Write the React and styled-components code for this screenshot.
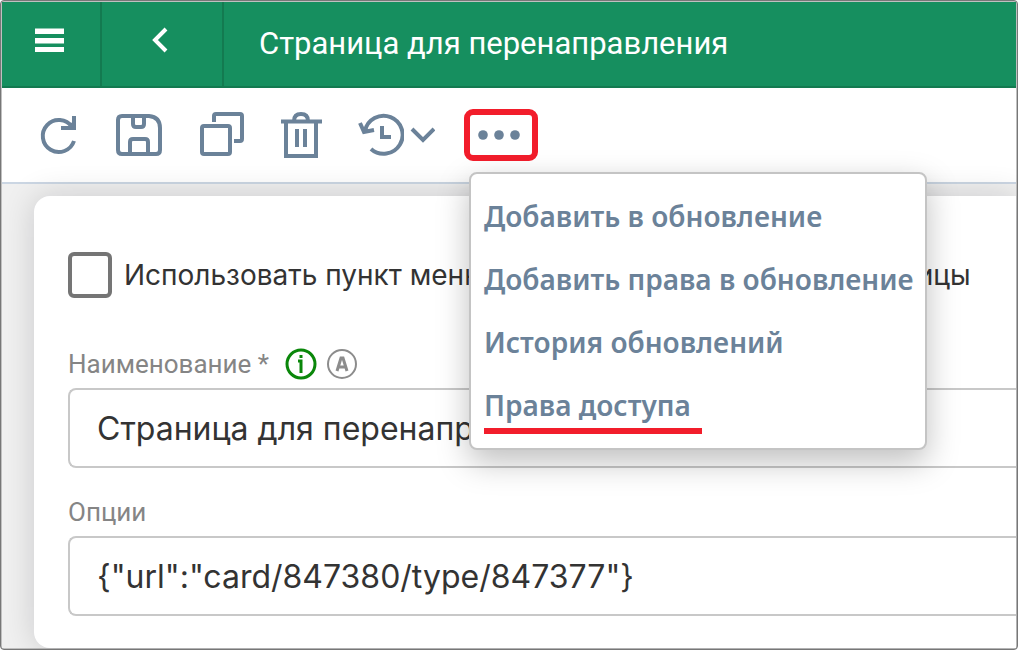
import styled, { createGlobalStyle } from "styled-components";

const menuItems = [
    { title: "Добавить в обновление" },
    { title: "Добавить права в обновление" },
    { title: "История обновлений" },
    { title: "Права доступа", marked: true },
];

export default function App() {
    return (
        <>
            <GlobalStyle/>
            <Frame>
                <Header>
                    <HeaderButton $width={100} aria-label="Меню">
                        <svg width="48" height="48" viewBox="0 0 48 48" fill="currentColor">
                            <path d="M8 8.500h29v5.500H8zM8 18h29v5.500H8zM8 27h29v5H8z"/>
                        </svg>
                    </HeaderButton>
                    <HeaderButton $width={122} aria-label="Назад">
                        <svg width="48" height="48" viewBox="0 0 48 48" fill="none" stroke="currentColor" strokeWidth="4">
                            <path d="M28 9L17 20L28 31"/>
                        </svg>
                    </HeaderButton>
                    <Title>Страница для перенаправления</Title>
                </Header>

                <Toolbar>
                    <ToolButton aria-label="Обновить">
                        <Icon>
                            <path d="M40 30A16 16 0 1 1 38 16"/>
                            <path d="M40 5V17H27M35 17L39 13"/>
                        </Icon>
                    </ToolButton>
                    <ToolButton aria-label="Сохранить">
                        <Icon>
                            <path d="M7 5H34Q45 6 45 17V39Q45 43 41 43H7Q3 43 3 39V9Q3 5 7 5Z"/>
                            <path d="M18 5V13Q18 16 21 16H26Q29 16 29 13V5"/>
                            <path d="M15 43V31Q15 28 18 28H30Q33 28 33 31V43"/>
                        </Icon>
                    </ToolButton>
                    <ToolButton aria-label="Копировать">
                        <Icon>
                            <rect x="6" y="15" width="28" height="28" rx="2"/>
                            <path d="M18 11V5Q18 3 20 3H44Q46 3 46 5V28Q46 30 44 30H38"/>
                        </Icon>
                    </ToolButton>
                    <ToolButton aria-label="Удалить">
                        <Icon>
                            <path d="M4 10.500H45M9 11V45H39V11M17 10Q17 3 24 3Q31 3 31 10"/>
                            <path d="M20 18V36M28 18V36"/>
                        </Icon>
                    </ToolButton>
                    <ToolButton $wide aria-label="История">
                        <Icon>
                            <path d="M9 20A19 19 0 1 1 15 38"/>
                            <path d="M4 12L8 21L18 19M6 17L12 20"/>
                            <path d="M26 15V26H35"/>
                        </Icon>
                        <svg width="27" height="48" viewBox="0 0 27 48" fill="none" stroke="currentColor" strokeWidth="4">
                            <path d="M4 18L15 29L26 18"/>
                        </svg>
                    </ToolButton>
                    <MoreWrapper>
                        <MoreButton aria-label="Ещё" aria-expanded="true">
                            <svg width="48" height="40" viewBox="0 0 48 40" fill="currentColor">
                                <circle cx="6" cy="20" r="4.800"/>
                                <circle cx="22" cy="20" r="4.800"/>
                                <circle cx="38" cy="20" r="4.800"/>
                            </svg>
                        </MoreButton>
                        <Menu>
                            {menuItems.map((item) => (
                                <MenuItem key={item.title}>
                                    {item.title}
                                    {item.marked && <Underline/>}
                                </MenuItem>
                            ))}
                        </Menu>
                    </MoreWrapper>
                </Toolbar>

                <Content>
                    <Card>
                        <CheckRow>
                            <Checkbox type="checkbox"/>
                            Использовать пункт меню для открытия стартовой страницы
                        </CheckRow>

                        <Field>
                            <LabelRow>
                                <label htmlFor="name">Наименование *</label>
                                <Hints>
                                    <svg width="32" height="32" viewBox="0 0 32 32" fill="none" stroke="#0a870a" strokeWidth="3">
                                        <circle cx="16" cy="16" r="14"/>
                                        <path d="M13 13H16V25M16 7V10"/>
                                    </svg>
                                    <svg width="32" height="32" viewBox="0 0 32 32" fill="none" stroke="#8c8c8c" strokeWidth="2">
                                        <circle cx="16" cy="16" r="14"/>
                                        <path d="M11 23L15 10H17L21 23M13 19H19" strokeWidth="3"/>
                                    </svg>
                                </Hints>
                            </LabelRow>
                            <Input id="name" defaultValue="Страница для перенаправления"/>
                        </Field>

                        <Field>
                            <LabelRow>
                                <label htmlFor="options">Опции</label>
                            </LabelRow>
                            <Input id="options" defaultValue={'{"url":"card/847380/type/847377"}'}/>
                        </Field>
                    </Card>
                </Content>
            </Frame>
        </>
    );
}

const Icon = ({ children }) => (
    <svg width="48" height="48" viewBox="0 0 48 48" fill="none" stroke="currentColor" strokeWidth="4">
        {children}
    </svg>
);

const GlobalStyle = createGlobalStyle`
  * {
    box-sizing: border-box;
  }

  body {
    margin: 0;
    font-family: Inter, "Liberation Sans", sans-serif;
    color: #333333;
  }

  button, input {
    font: inherit;
    color: inherit;
  }

  svg {
    display: block;
    flex: none;
  }
`

const Frame = styled.div`
  display: flex;
  flex-direction: column;
  min-height: 100vh;
  padding: 1px;
  border: 1px solid #777777;
  border-radius: 4px;
  background-color: #c0c0c0;
  overflow: hidden;
`

const Header = styled.header`
  display: flex;
  height: 86px;
  border-bottom: 2px solid #137a50;
  background-color: #168f5f;
  color: white;
`

const HeaderButton = styled.button`
  display: flex;
  justify-content: center;
  align-items: center;
  flex: none;
  width: ${(props) => props.$width}px;
  padding: 0;
  border: none;
  border-right: 2px solid #137a50;
  background: none;
`

const Title = styled.h1`
  margin: 0;
  padding-left: 35px;
  font-family: Roboto, sans-serif;
  font-size: 31px;
  font-weight: 400;
  line-height: 84px;
  white-space: nowrap;
`

const Toolbar = styled.div`
  display: flex;
  align-items: center;
  gap: 29px;
  height: 96px;
  padding: 0 30px;
  border-bottom: 2px solid #cbd6e3;
  background-color: white;
  color: #6b8299;
`

const ToolButton = styled.button`
  display: flex;
  justify-content: ${(props) => (props.$wide ? "space-between" : "center")};
  flex: none;
  width: ${(props) => (props.$wide ? 79 : 52)}px;
  padding: 0;
  border: none;
  background: none;
`

const MoreWrapper = styled.div`
  position: relative;
`

const MoreButton = styled.button`
  display: flex;
  justify-content: center;
  width: 74px;
  height: 52px;
  padding: 0;
  border: 6px solid #f21d2b;
  border-radius: 9px;
  background: white;
`

const Menu = styled.div`
  position: absolute;
  top: 63px;
  left: 5px;
  z-index: 1;
  padding: 10px 0 12px;
  border: 2px solid #c4c4c4;
  border-radius: 8px;
  background-color: white;
  box-shadow: 0 12px 32px rgba(0, 0, 0, 0.25);
`

const MenuItem = styled.button`
  display: block;
  position: relative;
  width: 100%;
  height: 63px;
  padding: 0 11px 0 13px;
  border: none;
  background: none;
  font-family: "Noto Sans", sans-serif;
  font-size: 28px;
  font-weight: 600;
  text-align: left;
  white-space: nowrap;
`

const Underline = styled.span`
  position: absolute;
  bottom: 2px;
  left: 13px;
  width: 218px;
  height: 6px;
  background-color: #f21d2b;
`

const Content = styled.main`
  display: flex;
  flex: 1;
  padding: 12px 0 0 32px;
  background-color: #f0f0f0;
`

const Card = styled.section`
  flex: 1;
  min-width: 0;
  padding: 56px 0 32px 34px;
  border-radius: 16px 0 0 16px;
  background-color: white;
  box-shadow: 0 0 32px rgba(0, 10, 20, 0.16);
`

const CheckRow = styled.label`
  display: flex;
  align-items: center;
  gap: 12px;
  font-size: 28px;
  line-height: 46px;
  white-space: nowrap;
`

const Checkbox = styled.input`
  appearance: none;
  flex: none;
  width: 44px;
  height: 46px;
  margin: 0;
  border: 4px solid #757575;
  border-radius: 6px;
`

const Field = styled.div`
  padding-top: 20px;

  ${CheckRow} + & {
    padding-top: 42px;
  }
`

const LabelRow = styled.div`
  display: flex;
  align-items: center;
  gap: 16px;
  height: 48px;
  color: #858585;
  font-family: Roboto, sans-serif;
  font-size: 26px;
`

const Hints = styled.span`
  display: flex;
  gap: 9px;
`

const Input = styled.input`
  display: block;
  width: 100%;
  height: 80px;
  padding: 0 27px;
  border: 2px solid #c8c8c8;
  border-right: none;
  border-radius: 8px 0 0 8px;
  background-color: transparent;
  font-size: 32px;
  outline: none;
`
